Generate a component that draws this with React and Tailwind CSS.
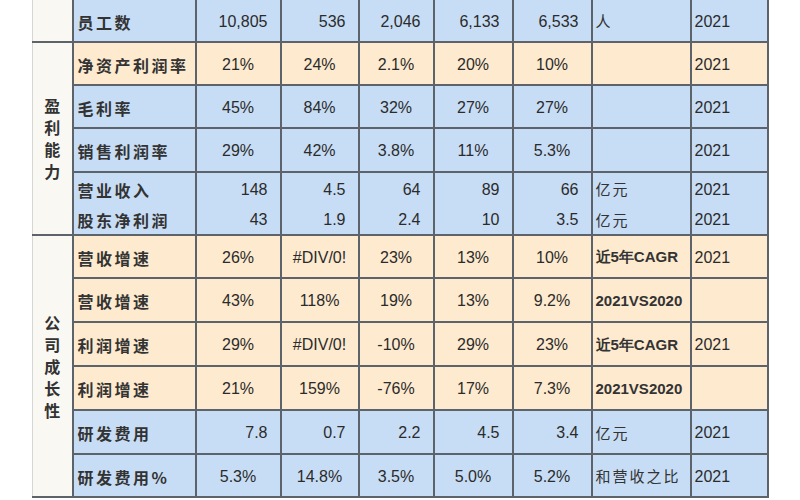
import React from 'react';

const BLUE = 'bg-[#c7ddf5]';
const CREAM = 'bg-[#fdeacf]';

const rows = [
  { bg: BLUE, label: '员工数', vals: ['10,805', '536', '2,046', '6,133', '6,533'], align: 'right', unit: '人', year: '2021', h: 'h-[42px]', first: true },
  { bg: CREAM, label: '净资产利润率', vals: ['21%', '24%', '2.1%', '20%', '10%'], align: 'center', unit: '', year: '2021', h: 'h-[43px]' },
  { bg: BLUE, label: '毛利率', vals: ['45%', '84%', '32%', '27%', '27%'], align: 'center', unit: '', year: '2021', h: 'h-[43px]' },
  { bg: BLUE, label: '销售利润率', vals: ['29%', '42%', '3.8%', '11%', '5.3%'], align: 'center', unit: '', year: '2021', h: 'h-[44px]' },
  { bg: BLUE, label: '营业收入', vals: ['148', '4.5', '64', '89', '66'], align: 'right', unit: '亿元', year: '2021', h: 'h-[32px]', joinBelow: true },
  { bg: BLUE, label: '股东净利润', vals: ['43', '1.9', '2.4', '10', '3.5'], align: 'right', unit: '亿元', year: '2021', h: 'h-[31px]', joinAbove: true },
  { bg: CREAM, label: '营收增速', vals: ['26%', '#DIV/0!', '23%', '13%', '10%'], align: 'center', unit: '近5年CAGR', year: '2021', h: 'h-[43px]', boldUnit: true },
  { bg: CREAM, label: '营收增速', vals: ['43%', '118%', '19%', '13%', '9.2%'], align: 'center', unit: '2021VS2020', year: '', h: 'h-[44px]', boldUnit: true },
  { bg: CREAM, label: '利润增速', vals: ['29%', '#DIV/0!', '-10%', '29%', '23%'], align: 'center', unit: '近5年CAGR', year: '2021', h: 'h-[44px]', boldUnit: true },
  { bg: CREAM, label: '利润增速', vals: ['21%', '159%', '-76%', '17%', '7.3%'], align: 'center', unit: '2021VS2020', year: '', h: 'h-[44px]', boldUnit: true },
  { bg: BLUE, label: '研发费用', vals: ['7.8', '0.7', '2.2', '4.5', '3.4'], align: 'right', unit: '亿元', year: '2021', h: 'h-[44px]' },
  { bg: BLUE, label: '研发费用%', vals: ['5.3%', '14.8%', '3.5%', '5.0%', '5.2%'], align: 'center', unit: '和营收之比', year: '2021', h: 'h-[43px]' },
];

// category cells, keyed by the row they start on
const groups = {
  0: { span: 1, text: '' },
  1: { span: 5, text: '盈利能力' },
  6: { span: 6, text: '公司成长性' },
};

const cjk = '[font-family:"Noto_Sans_CJK_SC",sans-serif]';
const num = '[font-family:"Liberation_Sans",Arial,sans-serif]';

function VerticalText({ text }) {
  return (
    <div className="flex flex-col items-center gap-[5px]">
      {text.split('').map((c, i) => (
        <span key={i} className={`${cjk} text-[16px] font-bold leading-[17px] text-[#333]`}>{c}</span>
      ))}
    </div>
  );
}

export default function App() {
  return (
    <div className="w-[800px] h-[500px] bg-white overflow-hidden">
      <table className="ml-[32px] table-fixed border-collapse w-[735px] border-b-2 border-r-2 border-[#5d636b]">
        <colgroup>
          <col className="w-[40px]" />
          <col className="w-[123px]" />
          <col className="w-[85px]" />
          <col className="w-[78px]" />
          <col className="w-[75px]" />
          <col className="w-[79px]" />
          <col className="w-[79px]" />
          <col className="w-[99px]" />
          <col className="w-[77px]" />
        </colgroup>
        <tbody>
          {rows.map((r, i) => {
            const edge = `${r.first || r.joinAbove ? 'border-t-0' : 'border-t-2'} ${r.joinBelow ? 'border-b-0' : 'border-b-2'}`;
            const cell = `border-l-2 border-r-2 ${edge} border-[#5d636b] ${r.bg}`;
            const g = groups[i];
            return (
              <tr key={i} className={r.h}>
                {g && (
                  <td
                    rowSpan={g.span}
                    className={`${i === 0 ? 'border-t-0' : 'border-t-2'} border-b-2 border-r-2 border-[#5d636b] border-l border-l-[#d6d6d6] bg-[#faf8f2] align-middle`}
                  >
                    {g.text && <VerticalText text={g.text} />}
                  </td>
                )}
                <td className={`${cell} pl-[4px] pt-[2px] ${cjk} text-[16px] font-bold tracking-[2.5px] text-[#333] whitespace-nowrap`}>
                  {r.label}
                </td>
                {r.vals.map((v, j) => (
                  <td
                    key={j}
                    className={`${cell} pt-[2px] ${num} text-[16px] text-[#2b2b2b] whitespace-nowrap ${r.align === 'right' ? 'text-right pr-[12px]' : 'text-center'}`}
                  >
                    {v}
                  </td>
                ))}
                <td
                  className={`${cell} pl-[3px] pt-[2px] text-[#333] whitespace-nowrap ${
                    r.boldUnit ? `${num} text-[15px] font-bold` : `${cjk} text-[15px] tracking-[2px]`
                  }`}
                >
                  {r.unit}
                </td>
                <td className={`${cell} pl-[3px] pt-[2px] ${num} text-[16px] text-[#2b2b2b]`}>{r.year}</td>
              </tr>
            );
          })}
        </tbody>
      </table>
    </div>
  );
}
